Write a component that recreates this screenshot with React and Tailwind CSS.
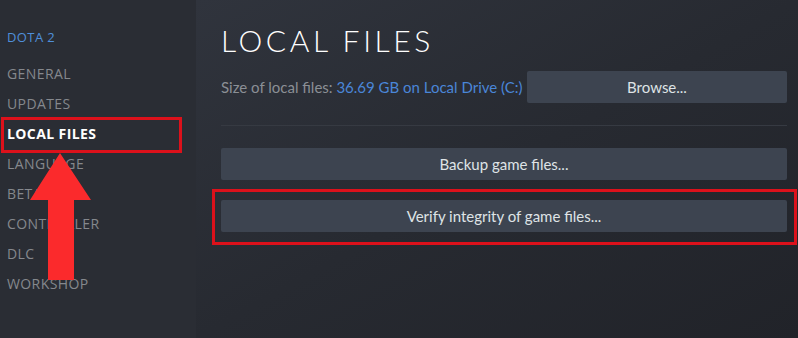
import React from 'react'

const navItems = ['GENERAL', 'UPDATES', 'LOCAL FILES', 'LANGUAGE', 'BETAS', 'CONTROLLER', 'DLC', 'WORKSHOP']

const Sidebar = () => (
  <div className="w-[196px] shrink-0 bg-[#2a2d34] pl-[7px] pt-[22px] font-['Open_Sans',sans-serif] text-[14px] tracking-[0.4px]">
    <div className="h-[30px] text-[13px] leading-[30px] text-[#4f8fda]">DOTA 2</div>
    <div className="mt-[7px]">
      {navItems.map((item) => (
        <div
          key={item}
          className={`h-[30px] leading-[30px] ${item === 'LOCAL FILES' ? 'font-bold text-white' : 'text-[#85888d]'}`}
        >
          {item}
        </div>
      ))}
    </div>
  </div>
)

const Button = ({ children, className = '' }) => (
  <div className={`flex h-[32px] items-center justify-center rounded-[2px] bg-[#3d4450] text-[15px] text-[#dfe3e6] ${className}`}>
    {children}
  </div>
)

const App = () => {
  return (
    <div className="relative flex h-[338px] w-[798px] overflow-hidden font-['Lato',sans-serif]">
      <Sidebar />

      {/* Main panel */}
      <div className="flex-1 bg-linear-to-br from-[#30343d] via-[#272a31] to-[#212329] pl-[25px] pr-[11px] pt-[22px]">
        <h1 className="text-[30px] font-light leading-[36px] tracking-[3.6px] text-white">LOCAL FILES</h1>

        <div className="mt-[13px] flex items-center">
          <span className="text-[15px] text-[#8b8f95]">
            Size of local files: <span className="text-[#4a86d8]">36.69 GB on Local Drive (C:)</span>
          </span>
          <Button className="ml-auto w-[260px]">Browse...</Button>
        </div>

        <div className="mt-[22px] h-px bg-[#363a42]" />

        <Button className="mt-[22px]">Backup game files...</Button>
        <Button className="mt-[20px]">Verify integrity of game files...</Button>
      </div>

      {/* Annotations */}
      <div className="absolute left-[1px] top-[117px] h-[36px] w-[181px] border-[3px] border-[#dc111b]" />
      <div className="absolute left-[212px] top-[189px] h-[56px] w-[585px] border-[3px] border-[#dc111b]" />
      <svg className="absolute left-0 top-0" width="120" height="300" viewBox="0 0 120 300">
        <polygon points="60,153 91,200 74,200 74,280 48,280 48,200 30,200" fill="#fb2a2c" />
      </svg>
    </div>
  )
}

export default App
